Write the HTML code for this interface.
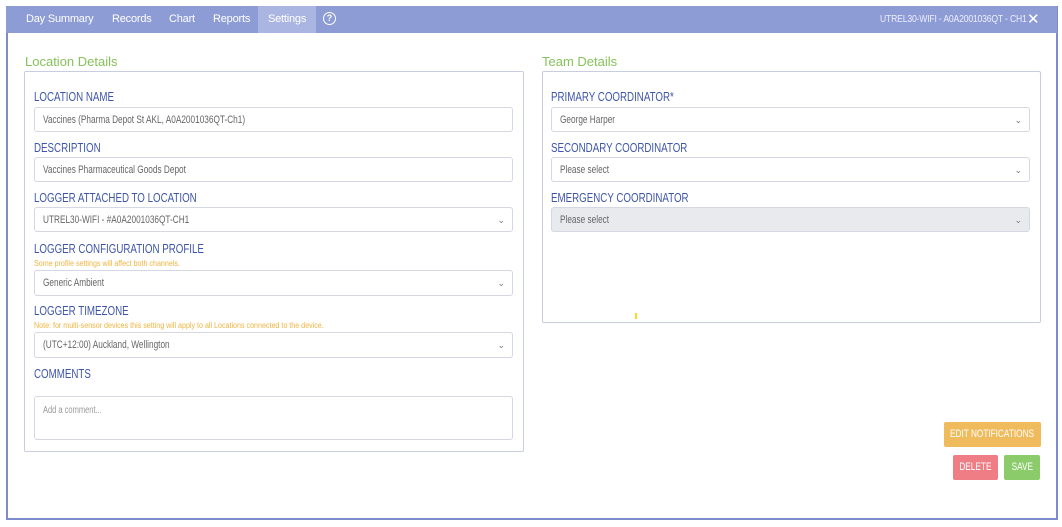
<!DOCTYPE html>
<html><head><style>
body{margin:0;width:1062px;height:527px;background:#fff;position:relative;overflow:hidden;font-family:"Liberation Sans",sans-serif}
.frame{position:absolute;left:6px;top:6px;width:1048px;height:512px;border:2px solid #7d8bcf;border-top:none}
.bar{position:absolute;left:6px;top:6px;width:1051px;height:27px;background:#8e9cd5}
.tab{position:absolute;top:6px;height:27px;line-height:27px;color:#fff;font-size:11px;letter-spacing:-0.2px;white-space:nowrap}
.abs{position:absolute}
.n{display:inline-block;transform:scaleX(.75);transform-origin:0 50%;white-space:nowrap}
.title{position:absolute;color:#86c25a;font-size:13px}
.box{position:absolute;border:1px solid #c9cde0;border-radius:2px}
.lbl{position:absolute;color:#3e55a8;font-size:13px;white-space:nowrap}
.note{position:absolute;color:#f0b440;font-size:8px;white-space:nowrap}
.note .n{transform:scaleX(.89)}
.in{position:absolute;height:25px;border:1px solid #d5d8e2;border-radius:3px;font-size:11px;color:#666;line-height:25px;padding-left:8px;box-sizing:border-box;white-space:nowrap}
.in .c{position:absolute;right:7px;top:0;font-size:9px;color:#777}
.btn{position:absolute;color:#fff;font-size:11px;line-height:25px;border-radius:2px;white-space:nowrap;display:flex;justify-content:center}
.btn .n{transform-origin:50% 50%;flex:none}
</style></head><body>
<div class="frame"></div>
<div class="bar"></div>
<div class="abs" style="left:258px;top:6px;width:58px;height:27px;background:#abb5e1"></div>
<div class="tab" style="left:26px">Day Summary</div>
<div class="tab" style="left:112px">Records</div>
<div class="tab" style="left:169px">Chart</div>
<div class="tab" style="left:213px">Reports</div>
<div class="tab" style="left:268px">Settings</div>
<div class="abs" style="left:323px;top:12px;width:11px;height:11px;border:1.5px solid #fff;border-radius:50%;color:#fff;font-size:9px;line-height:11px;text-align:center;font-weight:bold">?</div>
<div class="tab" style="left:880px;font-size:10px;color:#eef"><span class="n" style="transform:scaleX(.86)">UTREL30-WIFI - A0A2001036QT - CH1</span></div>
<div class="tab" style="left:1027px;font-size:15px">✕</div>

<div class="title" style="left:25px;top:54px">Location Details</div>
<div class="box" style="left:24px;top:71px;width:498px;height:379px"></div>
<div class="lbl" style="left:34px;top:89px"><span class="n">LOCATION NAME</span></div>
<div class="in" style="left:34px;top:107px;width:479px"><span class="n">Vaccines (Pharma Depot St AKL, A0A2001036QT-Ch1)</span></div>
<div class="lbl" style="left:34px;top:140px"><span class="n">DESCRIPTION</span></div>
<div class="in" style="left:34px;top:157px;width:479px"><span class="n">Vaccines Pharmaceutical Goods Depot</span></div>
<div class="lbl" style="left:34px;top:190px"><span class="n">LOGGER ATTACHED TO LOCATION</span></div>
<div class="in" style="left:34px;top:207px;width:479px"><span class="n">UTREL30-WIFI - #A0A2001036QT-CH1</span><span class="c">⌄</span></div>
<div class="lbl" style="left:34px;top:241px"><span class="n">LOGGER CONFIGURATION PROFILE</span></div>
<div class="note" style="left:34px;top:259px"><span class="n">Some profile settings will affect both channels.</span></div>
<div class="in" style="left:34px;top:270px;width:479px;height:26px"><span class="n">Generic Ambient</span><span class="c">⌄</span></div>
<div class="lbl" style="left:34px;top:303px"><span class="n">LOGGER TIMEZONE</span></div>
<div class="note" style="left:34px;top:321px"><span class="n">Note: for multi-sensor devices this setting will apply to all Locations connected to the device.</span></div>
<div class="in" style="left:34px;top:332px;width:479px;height:26px"><span class="n">(UTC+12:00) Auckland, Wellington</span><span class="c">⌄</span></div>
<div class="lbl" style="left:34px;top:366px"><span class="n">COMMENTS</span></div>
<div class="in" style="left:34px;top:396px;width:479px;height:44px;line-height:28px;color:#999;font-size:10px"><span class="n">Add a comment...</span></div>

<div class="title" style="left:542px;top:54px">Team Details</div>
<div class="box" style="left:542px;top:71px;width:497px;height:250px"></div>
<div class="lbl" style="left:551px;top:89px"><span class="n">PRIMARY COORDINATOR*</span></div>
<div class="in" style="left:551px;top:107px;width:479px"><span class="n">George Harper</span><span class="c">⌄</span></div>
<div class="lbl" style="left:551px;top:140px"><span class="n">SECONDARY COORDINATOR</span></div>
<div class="in" style="left:551px;top:157px;width:479px"><span class="n">Please select</span><span class="c">⌄</span></div>
<div class="lbl" style="left:551px;top:190px"><span class="n">EMERGENCY COORDINATOR</span></div>
<div class="in" style="left:551px;top:207px;width:479px;background:#e9eaee"><span class="n">Please select</span><span class="c">⌄</span></div>
<div class="abs" style="left:635px;top:313px;width:2px;height:6px;background:#f0e020"></div>

<div class="btn" style="left:944px;top:422px;width:97px;height:25px;background:#f0bb5c"><span class="n">EDIT NOTIFICATIONS</span></div>
<div class="btn" style="left:953px;top:455px;width:45px;height:25px;background:#ee7d86"><span class="n">DELETE</span></div>
<div class="btn" style="left:1004px;top:455px;width:36px;height:25px;background:#8ccb6a"><span class="n">SAVE</span></div>
</body></html>
